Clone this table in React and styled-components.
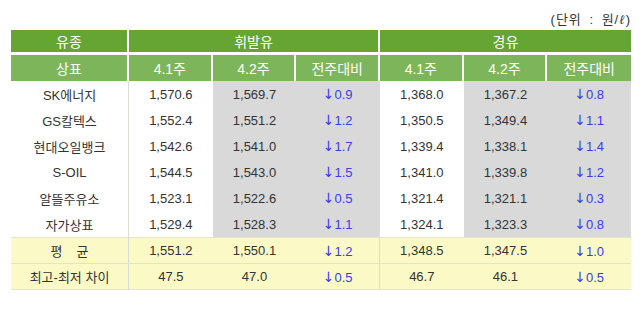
import React from "react";
import styled, { createGlobalStyle } from "styled-components";

const GlobalStyle = createGlobalStyle`
  body {
    margin: 0;
    background: #ffffff;
    font-family: "Liberation Sans", "Noto Sans CJK KR", sans-serif;
    color: #333333;
  }
`;

const Wrapper = styled.div`
  width: 640px;
  padding: 11px 9px 0 11px;
  box-sizing: border-box;
`;

const Unit = styled.div`
  text-align: right;
  font-size: 13px;
  line-height: 17px;
  height: 19px;
  letter-spacing: 1px;
  word-spacing: 3px;
  color: #333;
`;

const Liter = styled.span`
  font-style: italic;
  font-family: "DejaVu Serif", serif;
`;

const Table = styled.table`
  width: 620px;
  border-collapse: separate;
  border-spacing: 0;
  table-layout: fixed;
  font-size: 13px;
`;

const HeadCell = styled.th`
  background: ${(p) => (p.$top ? "#64a533" : "#7db65a")};
  color: #ffffff;
  font-weight: normal;
  font-size: 14px;
  height: ${(p) => (p.$top ? "22px" : "26px")};
  padding: 0;
  text-align: center;
  border-right: ${(p) => (p.$last ? "0" : "2px solid #ffffff")};
  border-bottom: ${(p) => (p.$top ? "3px solid #ffffff" : "0")};
`;

const Cell = styled.td`
  height: ${(p) => (p.$foot ? "25px" : "26px")};
  padding: 0;
  text-align: center;
  background: ${(p) => (p.$foot ? "#fbfac6" : p.$gray ? "#d9d9d9" : "#ffffff")};
  border-right: ${(p) => (p.$sep ? "1px solid #dcdcd0" : "0")};
  border-bottom: ${(p) => (p.$foot ? "1px solid #e4e4cc" : "0")};
  border-top: ${(p) => (p.$first ? "1px solid #e4e4cc" : "0")};
`;

const Down = styled.span`
  color: #3b3bee;
`;

const Arrow = styled.span`
  font-family: "DejaVu Sans", sans-serif;
  font-size: 14px;
`;

const Label = styled.span`
  letter-spacing: ${(p) => (p.$wide ? "14px" : "0")};
  margin-right: ${(p) => (p.$wide ? "-14px" : "0")};
`;

const rows = [
  ["SK에너지", "1,570.6", "1,569.7", "0.9", "1,368.0", "1,367.2", "0.8"],
  ["GS칼텍스", "1,552.4", "1,551.2", "1.2", "1,350.5", "1,349.4", "1.1"],
  ["현대오일뱅크", "1,542.6", "1,541.0", "1.7", "1,339.4", "1,338.1", "1.4"],
  ["S-OIL", "1,544.5", "1,543.0", "1.5", "1,341.0", "1,339.8", "1.2"],
  ["알뜰주유소", "1,523.1", "1,522.6", "0.5", "1,321.4", "1,321.1", "0.3"],
  ["자가상표", "1,529.4", "1,528.3", "1.1", "1,324.1", "1,323.3", "0.8"],
];

const footer = [
  ["평균", "1,551.2", "1,550.1", "1.2", "1,348.5", "1,347.5", "1.0"],
  ["최고-최저 차이", "47.5", "47.0", "0.5", "46.7", "46.1", "0.5"],
];

const Change = ({ value }) => (
  <Down>
    <Arrow>↓</Arrow>
    {value}
  </Down>
);

const Row = ({ data, foot, first }) => (
  <tr>
    <Cell $foot={foot} $first={first} $sep>
      {data[0] === "평균" ? <Label $wide>평균</Label> : data[0]}
    </Cell>
    <Cell $foot={foot} $first={first}>{data[1]}</Cell>
    <Cell $foot={foot} $first={first} $gray>{data[2]}</Cell>
    <Cell $foot={foot} $first={first} $gray $sep>
      <Change value={data[3]} />
    </Cell>
    <Cell $foot={foot} $first={first}>{data[4]}</Cell>
    <Cell $foot={foot} $first={first} $gray>{data[5]}</Cell>
    <Cell $foot={foot} $first={first} $gray>
      <Change value={data[6]} />
    </Cell>
  </tr>
);

export default function App() {
  return (
    <Wrapper>
      <GlobalStyle />
      <Unit>
        (단위 : 원/<Liter>ℓ</Liter>)
      </Unit>
      <Table>
        <colgroup>
          <col style={{ width: 118 }} />
          <col />
          <col />
          <col />
          <col />
          <col />
          <col />
        </colgroup>
        <thead>
          <tr>
            <HeadCell $top>유종</HeadCell>
            <HeadCell $top colSpan={3}>휘발유</HeadCell>
            <HeadCell $top $last colSpan={3}>경유</HeadCell>
          </tr>
          <tr>
            <HeadCell>상표</HeadCell>
            <HeadCell>4.1주</HeadCell>
            <HeadCell>4.2주</HeadCell>
            <HeadCell>전주대비</HeadCell>
            <HeadCell>4.1주</HeadCell>
            <HeadCell>4.2주</HeadCell>
            <HeadCell $last>전주대비</HeadCell>
          </tr>
        </thead>
        <tbody>
          {rows.map((r) => (
            <Row key={r[0]} data={r} />
          ))}
          {footer.map((r, i) => (
            <Row key={r[0]} data={r} foot first={i === 0} />
          ))}
        </tbody>
      </Table>
    </Wrapper>
  );
}
